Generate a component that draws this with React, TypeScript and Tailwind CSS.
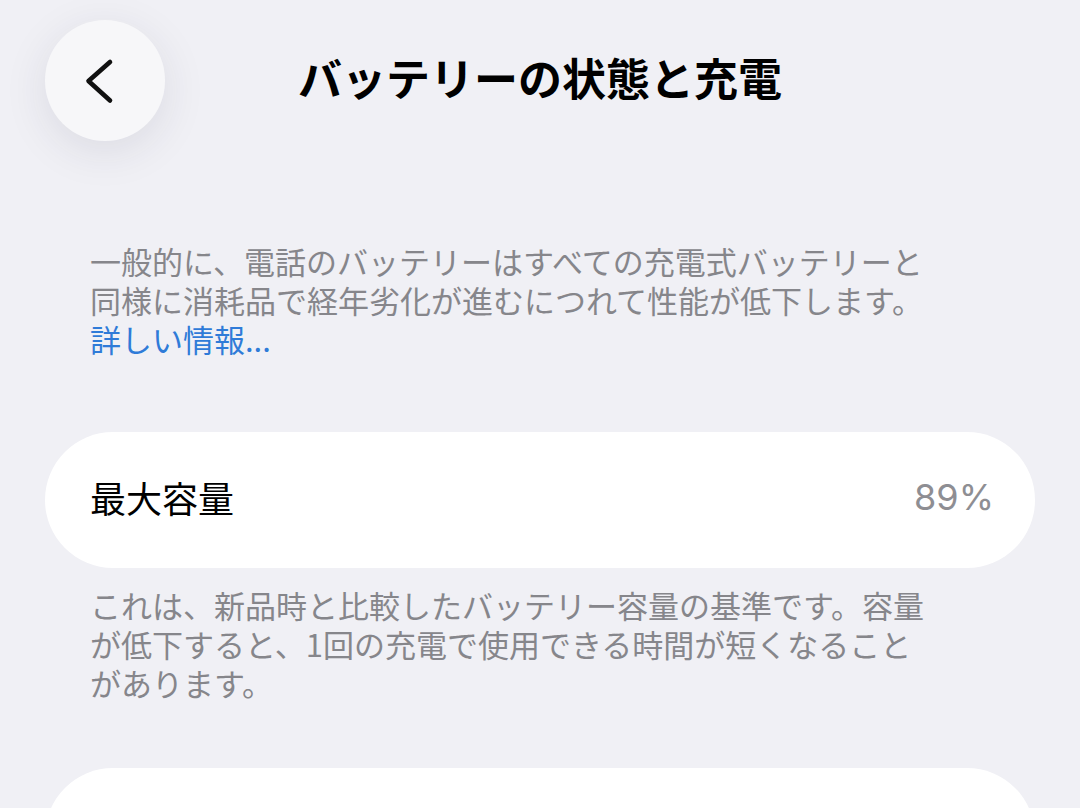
const jp = { fontFamily: '"Noto Sans CJK JP", "Noto Sans", sans-serif' };

function BackButton() {
  return (
    <button
      type="button"
      aria-label="戻る"
      className="flex h-[121px] w-[120px] items-center justify-center rounded-full bg-[#f7f7f9] shadow-[0_10px_44px_rgba(40,40,70,0.10)]"
    >
      <svg width="120" height="121" viewBox="0 0 120 121" fill="none">
        <polyline
          points="65,42 43.5,61 65,80.5"
          stroke="#111"
          strokeWidth="4.6"
          strokeLinecap="round"
          strokeLinejoin="round"
        />
      </svg>
    </button>
  );
}

export default function App() {
  return (
    <div className="min-h-[808px] w-full overflow-hidden bg-[#f0f0f5] px-[45px]" style={jp}>
      {/* header */}
      <header className="grid grid-cols-[120px_1fr_120px] items-center pt-[20px]">
        <BackButton />
        <h1 className="mb-[8px] text-center text-[44px] font-bold leading-none text-black">
          バッテリーの状態と充電
        </h1>
        <div />
      </header>

      {/* intro */}
      <p className="mt-[100px] px-[45px] text-[31px] leading-[39px] text-[#86868b]">
        <span className="block whitespace-nowrap">一般的に、電話のバッテリーはすべての充電式バッテリーと</span>
        <span className="block whitespace-nowrap">同様に消耗品で経年劣化が進むにつれて性能が低下します。</span>
        <a className="block text-[#2f7bd8]">詳しい情報...</a>
      </p>

      {/* capacity */}
      <div className="mt-[74px] flex h-[136px] items-center justify-between rounded-[68px] bg-white pl-[45px] pr-[41px]">
        <span className="pb-[6px] text-[36px] text-black">最大容量</span>
        <span
          className="pb-[6px] text-[36px] text-[#8e8e93]"
          style={{ fontFamily: 'Inter, "Noto Sans CJK JP", sans-serif' }}
        >
          89%
        </span>
      </div>

      <p className="mt-[17px] px-[45px] text-[31px] leading-[39px] text-[#86868b]">
        <span className="block whitespace-nowrap">これは、新品時と比較したバッテリー容量の基準です。容量</span>
        <span className="block whitespace-nowrap">が低下すると、1回の充電で使用できる時間が短くなること</span>
        <span className="block whitespace-nowrap">があります。</span>
      </p>

      {/* next group (cut off) */}
      <div className="mt-[66px] h-[136px] rounded-[68px] bg-white" />
    </div>
  );
}
